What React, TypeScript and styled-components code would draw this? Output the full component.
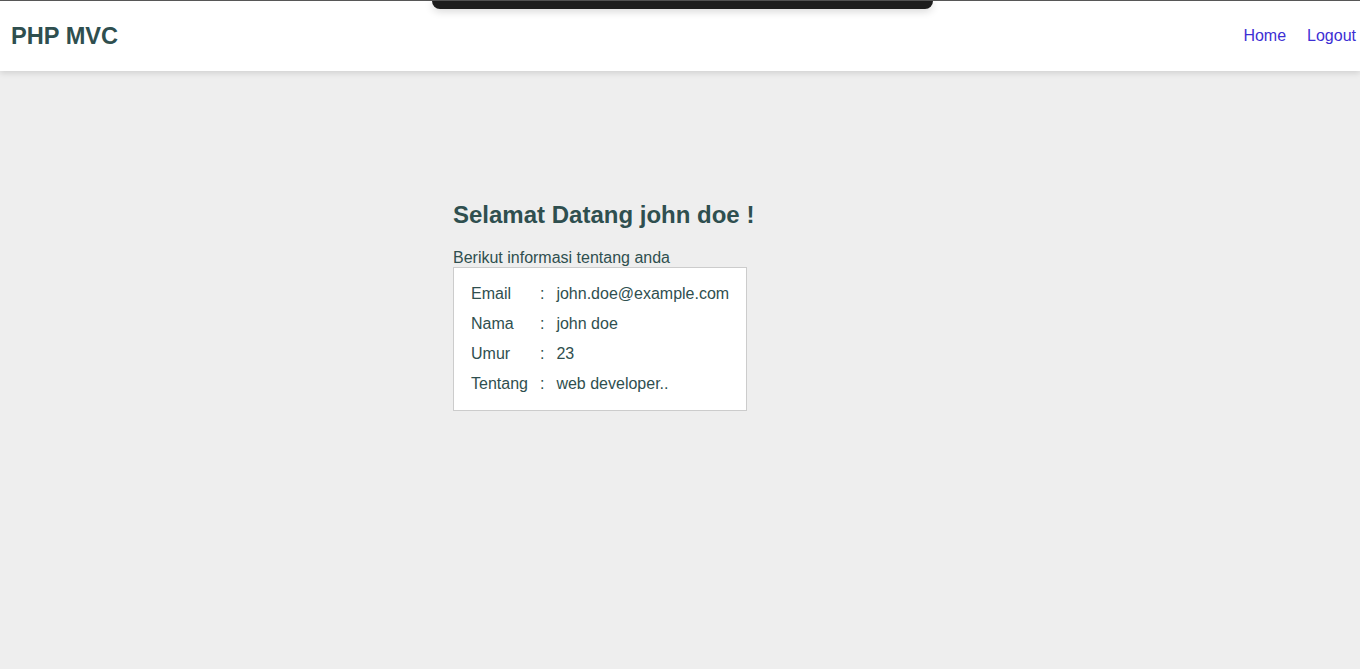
import React from "react";
import styled, { createGlobalStyle } from "styled-components";

const GlobalStyle = createGlobalStyle`
  html, body { margin: 0; padding: 0; }
  body {
    background: #eeeeee;
    font-family: "Liberation Sans", Arial, sans-serif;
    color: #2f4f4f;
    min-height: 669px;
  }
`;

const Page = styled.div`
  position: relative;
  min-height: 669px;
  border-top: 1px solid #5a5a5a;
  box-sizing: border-box;
`;

const TopOverlay = styled.div`
  position: absolute;
  top: 0;
  left: 432px;
  width: 501px;
  height: 8px;
  background: #1e1e1e;
  border-radius: 0 0 8px 8px;
  box-shadow: 0 2px 8px rgba(0, 0, 0, 0.18);
  z-index: 10;
`;

const Header = styled.header`
  height: 70px;
  background: #ffffff;
  display: flex;
  align-items: center;
  justify-content: space-between;
  padding: 0 4px 0 11px;
  box-shadow: 0 2px 6px rgba(0, 0, 0, 0.13);
`;

const Brand = styled.div`
  font-size: 23.6px;
  font-weight: bold;
  color: #2f4f4f;
`;

const Nav = styled.nav`
  display: flex;
  gap: 21px;
`;

const NavLink = styled.a`
  font-size: 16px;
  color: #3d2fd4;
  text-decoration: none;
`;

const Main = styled.main`
  padding: 130px 0 0 453px;
`;

const Heading = styled.h1`
  margin: 0 0 20px;
  font-size: 24px;
  font-weight: bold;
  color: #2f4f4f;
  line-height: 28px;
`;

const Intro = styled.p`
  margin: 0;
  font-size: 16px;
  line-height: 18px;
  color: #2f4f4f;
`;

const InfoCard = styled.div`
  display: inline-grid;
  grid-template-columns: auto auto auto;
  column-gap: 12px;
  background: #ffffff;
  border: 1px solid #cccccc;
  padding: 11px 17px 11px 17px;
`;

const Cell = styled.div`
  font-size: 16px;
  line-height: 30px;
  color: #2f4f4f;
`;

const rows: [string, string][] = [
  ["Email", "john.doe@example.com"],
  ["Nama", "john doe"],
  ["Umur", "23"],
  ["Tentang", "web developer.."],
];

export default function App() {
  return (
    <>
      <GlobalStyle />
      <Page>
        <TopOverlay />
        <Header>
          <Brand>PHP MVC</Brand>
          <Nav>
            <NavLink href="#">Home</NavLink>
            <NavLink href="#">Logout</NavLink>
          </Nav>
        </Header>
        <Main>
          <Heading>Selamat Datang john doe !</Heading>
          <Intro>Berikut informasi tentang anda</Intro>
          <InfoCard>
            {rows.map(([k, v]) => (
              <React.Fragment key={k}>
                <Cell>{k}</Cell>
                <Cell>:</Cell>
                <Cell>{v}</Cell>
              </React.Fragment>
            ))}
          </InfoCard>
        </Main>
      </Page>
    </>
  );
}
